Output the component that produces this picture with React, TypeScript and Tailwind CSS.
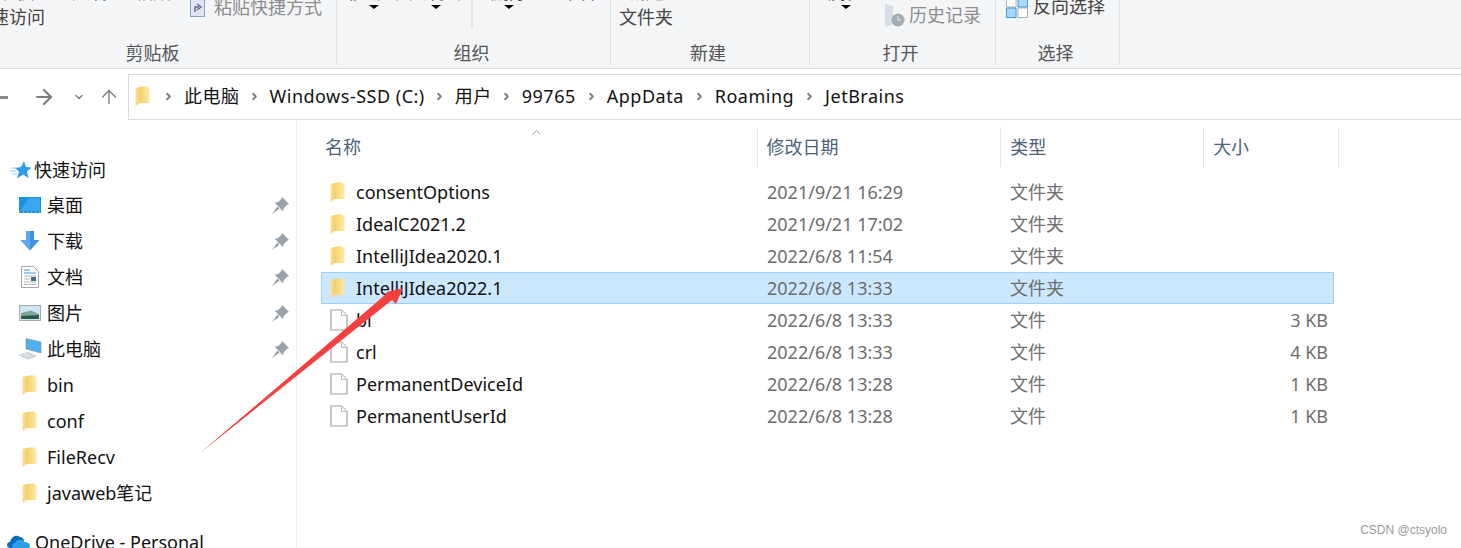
import type { ReactNode } from 'react';
import { ArrowRight, ArrowUp, ChevronDown, ChevronRight, ChevronUp } from 'lucide-react';

const uiFont = "font-['Noto_Sans','Noto_Sans_CJK_SC',sans-serif]";

const FolderIcon = () => (
  <svg width="15" height="21" viewBox="0 0 15 21" className="shrink-0">
    <defs>
      <linearGradient id="fold" x1="0" x2="1" y1="0" y2="0">
        <stop offset="0" stopColor="#fbe49a" />
        <stop offset="0.3" stopColor="#f4cf6c" />
        <stop offset="1" stopColor="#fdeaa9" />
      </linearGradient>
    </defs>
    <path d="M0.500 2 L7 0.500 L13 0.500 L13 2 L14.500 2 L14.500 17 L4.500 17 L0.500 20.500 Z" fill="url(#fold)" />
  </svg>
);

const FileIcon = () => (
  <svg width="18" height="22" viewBox="0 0 18 22" className="shrink-0">
    <path d="M1 1 H11.500 L17 6.500 V21 H1 Z" fill="#fdfdfd" stroke="#a2a2a2" strokeWidth="1.200" />
    <path d="M11.500 1 V6.500 H17" fill="#f2f2f2" stroke="#bdbdbd" />
  </svg>
);

const PinIcon = () => (
  <svg width="17" height="17" viewBox="0 0 16 16">
    <path d="M9.500 0 L16 6.500 L14 7.500 L11 10.500 L10.500 13.500 L2.500 5.500 L5.500 5 L8.500 2 Z" fill="#98a2aa" />
    <path d="M5 9 L0 16 L7 11 Z" fill="#98a2aa" />
  </svg>
);

const StarIcon = () => (
  <svg width="22" height="20" viewBox="0 0 22 20" className="shrink-0">
    <path d="M14 1 L16 7 L21.500 7.500 L17 11.500 L18.500 18 L13 14.500 L7 18.500 L9 11.500 L5 8 L11 7 Z" fill="#2f9bea" />
    <path d="M1 8 H7 M0 11 H6 M2 14 H7" stroke="#8ccbf5" strokeWidth="1" />
  </svg>
);

const DesktopIcon = () => (
  <svg width="22" height="16" viewBox="0 0 22 16">
    <rect width="22" height="16" fill="#1a8fe0" />
    <path d="M1 14 L10 1 H21 V14 Z" fill="#39a6ef" />
    <path d="M0 15 H22" stroke="#bfe2f8" strokeDasharray="1 3" />
  </svg>
);

const DownloadIcon = () => (
  <svg width="20" height="20" viewBox="0 0 20 20">
    <path d="M6 0 H14 V9 H19.500 L10 19.500 L0.500 9 H6 Z" fill="#3d93e2" />
    <path d="M6 0 H10 V19.500 L0.500 9 H6 Z" fill="#5aa9ee" />
  </svg>
);

const DocIcon = () => (
  <svg width="18" height="22" viewBox="0 0 18 22">
    <path d="M0.500 0.500 H12.500 L17.500 5.500 V21.500 H0.500 Z" fill="#fff" stroke="#a5a5a5" />
    <path d="M3 4 H9 M3 7 H15" stroke="#2f9ae0" strokeWidth="1.200" />
    <path d="M3 10 H15 M3 13 H9 M3 16 H15 M3 18.500 H15" stroke="#b5b5b5" />
    <rect x="10" y="11" width="5" height="4" fill="#3e6e8e" />
  </svg>
);

const PictureIcon = () => (
  <svg width="22" height="16" viewBox="0 0 22 16">
    <rect x="0.500" y="0.500" width="21" height="15" fill="#cfe6f3" stroke="#a8a8a8" />
    <path d="M2 8 L12 5.500 L20 9 V14 H2 Z" fill="#7fa5a0" />
    <path d="M2 11 L20 10 V14 H2 Z" fill="#2f5a48" />
  </svg>
);

const PcIcon = () => (
  <svg width="24" height="22" viewBox="0 0 24 22">
    <path d="M8 0.500 L23 4 V15 L8 11 Z" fill="#4db2ee" stroke="#87919a" strokeWidth="0.600" />
    <path d="M0 17 L10 14 L19 18 L10 21.500 Z" fill="#c3c9cf" />
    <path d="M3 17.500 L10 15.500 M6 18.500 L12 16.500 M9 19.500 L15 17.500" stroke="#f1f3f5" />
  </svg>
);

const OneDriveIcon = () => (
  <svg width="24" height="16" viewBox="0 0 24 16">
    <path d="M4 8 C5 3 10 0 14 3 C16 3 18 5 18 7 L9 14 H4 C0 14 0 8 4 8 Z" fill="#0b6cbd" />
    <path d="M9 9 C11 5 17 5 18 8 C22 8 24 10 24 12 C24 14 22 15 21 15 H8 C5 15 6 9 9 9 Z" fill="#2a9fe8" />
  </svg>
);

const DropArrow = () => (
  <span className="mt-[2px] block h-0 w-0 border-x-[5px] border-t-[4px] border-x-transparent border-t-black" />
);

// ribbon buttons are cut by the top of the window, only the last pixels of their text show
const RibbonDrop = ({ text, className }: { text: string; className: string }) => (
  <div className={`${className} mt-[-19px] flex shrink-0 flex-col items-center text-[18px] leading-[22px] text-[#444]`}>
    <span>{text}</span>
    <DropArrow />
  </div>
);

const Group = ({
  label,
  width,
  labelPad,
  children,
}: {
  label: string;
  width: string;
  labelPad: string;
  children?: ReactNode;
}) => (
  <div className={`${width} flex h-[65px] shrink-0 flex-col border-r border-[#dfe0e2]`}>
    <div className="flex h-[41px] items-start overflow-hidden">{children}</div>
    <div className={`${labelPad} text-center text-[18px] leading-[24px] text-[#555]`}>{label}</div>
  </div>
);

const Crumb = ({ text, gap }: { text: string; gap: string }) => (
  <div className={`flex items-center ${gap}`}>
    <ChevronRight size={11} strokeWidth={4} className="mr-[10px] text-[#7d7d7d]" />
    <span>{text}</span>
  </div>
);

const quickAccess = [
  { name: '桌面', icon: <DesktopIcon /> },
  { name: '下载', icon: <DownloadIcon /> },
  { name: '文档', icon: <DocIcon /> },
  { name: '图片', icon: <PictureIcon /> },
  { name: '此电脑', icon: <PcIcon /> },
];

const folders = ['bin', 'conf', 'FileRecv', 'javaweb笔记'];

const files = [
  { name: 'consentOptions', date: '2021/9/21 16:29', type: '文件夹', size: '' },
  { name: 'IdealC2021.2', date: '2021/9/21 17:02', type: '文件夹', size: '' },
  { name: 'IntelliJIdea2020.1', date: '2022/6/8 11:54', type: '文件夹', size: '' },
  { name: 'IntelliJIdea2022.1', date: '2022/6/8 13:33', type: '文件夹', size: '', selected: true },
  { name: 'bl', date: '2022/6/8 13:33', type: '文件', size: '3 KB' },
  { name: 'crl', date: '2022/6/8 13:33', type: '文件', size: '4 KB' },
  { name: 'PermanentDeviceId', date: '2022/6/8 13:28', type: '文件', size: '1 KB' },
  { name: 'PermanentUserId', date: '2022/6/8 13:28', type: '文件', size: '1 KB' },
];

export default function App() {
  return (
    <div className={`relative h-[548px] w-[1461px] overflow-hidden bg-white ${uiFont}`}>
      {/* Ribbon */}
      <div className="flex h-[69px] border-b border-[#dadbdc] bg-[#f4f5f7]">
        <Group label="剪贴板" width="w-[337px]" labelPad="pr-[31px]">
          <div className="ml-[-9px] mt-[-20px] w-[54px] shrink-0 whitespace-nowrap text-[18px] leading-[25px] text-[#444]">
            <div>到"快</div>
            <div>速访问</div>
          </div>
          <div className="ml-[27px] mt-[-19px] shrink-0 text-[18px] leading-[22px] text-[#444]">复制</div>
          <div className="ml-[27px] mt-[-19px] shrink-0 text-[18px] leading-[22px] text-[#8d8d8d]">粘贴</div>
          <svg width="15" height="17" viewBox="0 0 15 17" className="ml-[19px] shrink-0">
            <rect x="0.500" y="-1" width="14" height="17.500" fill="#dfe6f2" stroke="#8ea0c0" />
            <path d="M5 12 V7 H9 M7 4 L11 7 L7 10" fill="none" stroke="#5f6f8a" strokeWidth="1.500" />
          </svg>
          <span className="ml-[9px] mt-[-7px] shrink-0 text-[18px] leading-[28px] text-[#8d8d8d]">粘贴快捷方式</span>
        </Group>
        <Group label="组织" width="w-[274px]" labelPad="pr-[4px]">
          <RibbonDrop text="移动到" className="ml-[10px]" />
          <RibbonDrop text="复制到" className="ml-[8px]" />
          <div className="ml-[8px] h-[29px] w-[2px] shrink-0 bg-[#e3e4e6]" />
          <RibbonDrop text="删除" className="ml-[18px]" />
          <div className="ml-[15px] mt-[-19px] shrink-0 text-[18px] leading-[22px] text-[#444]">重命名</div>
        </Group>
        <Group label="新建" width="w-[199px]" labelPad="pr-[4px]">
          <div className="ml-[8px] mt-[-20px] text-center text-[18px] leading-[25px] text-[#444]">
            <div>新建</div>
            <div>文件夹</div>
          </div>
        </Group>
        <Group label="打开" width="w-[186px]" labelPad="pr-[4px]">
          <RibbonDrop text="属性" className="ml-[18px]" />
          <svg width="22" height="24" viewBox="0 0 22 24" className="ml-[20px] mt-[4px] shrink-0">
            <path d="M1 0 L9 2 V20 L1 23 Z" fill="#d5dde6" />
            <circle cx="14" cy="16" r="6.500" fill="#a4adb7" />
            <path d="M14 12 V16 H17" fill="none" stroke="#e9edf0" />
          </svg>
          <span className="ml-[3px] mt-[1px] shrink-0 text-[18px] leading-[28px] text-[#8d8d8d]">历史记录</span>
        </Group>
        <Group label="选择" width="w-[124px]" labelPad="pr-[4px]">
          <svg width="22" height="18" viewBox="0 0 22 18" className="ml-[10px] shrink-0">
            <path d="M0.500 -4 H10 V7 H0.500 Z M12 8 H21.500 V17.500 H12 Z" fill="#fff" stroke="#b0b0b0" />
            <path d="M12 -4 H21.500 V7 H12 Z M0.500 8 H10 V17.500 H0.500 Z" fill="#a9d8fb" stroke="#3f97de" />
          </svg>
          <span className="ml-[5px] mt-[-8px] shrink-0 text-[18px] leading-[28px] text-[#444]">反向选择</span>
        </Group>
      </div>

      {/* Nav + address bar */}
      <div className="mt-[5px] flex h-[46px] items-center">
        <div className="flex h-full w-[128px] items-center text-[#7e7e7e]">
          <div className="h-[3px] w-[8px] bg-[#8a8a8a]" />
          <ArrowRight size={24} strokeWidth={2.2} className="ml-[24px]" />
          <ChevronDown size={12} strokeWidth={3} className="ml-[17px]" />
          <ArrowUp size={22} strokeWidth={1.5} className="ml-[13px]" />
        </div>
        <div className="flex h-full flex-1 items-center border-y border-l border-[#d9d9d9] pb-[2px] pl-[6px] text-[18px] leading-[42px] tracking-[0.5px] text-[#111]">
          <FolderIcon />
          <Crumb text="此电脑" gap="ml-[13px]" />
          <Crumb text="Windows-SSD (C:)" gap="ml-[9px]" />
          <Crumb text="用户" gap="ml-[9px]" />
          <Crumb text="99765" gap="ml-[9px]" />
          <Crumb text="AppData" gap="ml-[10px]" />
          <Crumb text="Roaming" gap="ml-[10px]" />
          <Crumb text="JetBrains" gap="ml-[10px]" />
        </div>
      </div>

      {/* Body */}
      <div className="flex text-[18px]">
        {/* Sidebar */}
        <div className="h-[428px] w-[297px] shrink-0 overflow-hidden border-r border-[#f0f0f0] pt-[31px] text-[#111]">
          <div className="flex h-9 items-center gap-[2px] pl-[10px] pt-[2px]">
            <StarIcon />
            <span>快速访问</span>
          </div>
          {quickAccess.map((item) => (
            <div key={item.name} className="flex h-9 items-center">
              <div className="flex w-[47px] justify-center pl-[13px]">{item.icon}</div>
              <span className="flex-1">{item.name}</span>
              <span className="mr-[7px]"><PinIcon /></span>
            </div>
          ))}
          {folders.map((name) => (
            <div key={name} className="flex h-9 items-center">
              <div className="w-[47px] pl-[22px]"><FolderIcon /></div>
              <span>{name}</span>
            </div>
          ))}
          <div className="mt-[13px] flex h-9 items-center gap-[5px] pl-[6px]">
            <OneDriveIcon />
            <span>OneDrive - Personal</span>
          </div>
        </div>

        {/* File list */}
        <div className="flex-1 pt-[7px]">
          <div className="relative flex h-[40px] w-[1042px] items-center text-[#4c607a]">
            <ChevronUp size={15} strokeWidth={1.2} className="absolute left-[232px] top-[-2px] text-[#808080]" />
            <div className="h-full w-[461px] border-r border-[#e5e5e5] pl-[28px] leading-[40px]">名称</div>
            <div className="h-full w-[244px] border-r border-[#e5e5e5] pl-[9px] leading-[40px]">修改日期</div>
            <div className="h-full w-[203px] border-r border-[#e5e5e5] pl-[9px] leading-[40px]">类型</div>
            <div className="h-full w-[135px] border-r border-[#e5e5e5] pl-[9px] leading-[40px]">大小</div>
          </div>
          <div className="ml-[24px] mt-[9px] w-[1013px]">
            {files.map((f) => (
              <div
                key={f.name}
                className={`flex h-8 items-center border ${f.selected ? 'border-[#99d1ff] bg-[#cce8ff]' : 'border-transparent'}`}
              >
                <div className="w-[34px] pl-[8px]">
                  {f.type === '文件夹' ? <FolderIcon /> : <FileIcon />}
                </div>
                <span className="w-[411px] text-[#111]">{f.name}</span>
                <span className="w-[243px] text-[#6d6d6d]">{f.date}</span>
                <span className="flex-1 text-[#6d6d6d]">{f.type}</span>
                <span className="pr-[5px] text-[#6d6d6d]">{f.size}</span>
              </div>
            ))}
          </div>
        </div>
      </div>

      {/* Red annotation arrow drawn on top */}
      <svg width="1461" height="548" viewBox="0 0 1461 548" className="pointer-events-none absolute inset-0">
        <polygon points="403,288 387,292 385,295 200,453 392,300 396,304" fill="#f5403f" />
      </svg>

      <div className="absolute bottom-[9px] right-[14px] font-['Liberation_Sans',sans-serif] text-[12px] text-[#9a9a9a]">
        CSDN @ctsyolo
      </div>
    </div>
  );
}
